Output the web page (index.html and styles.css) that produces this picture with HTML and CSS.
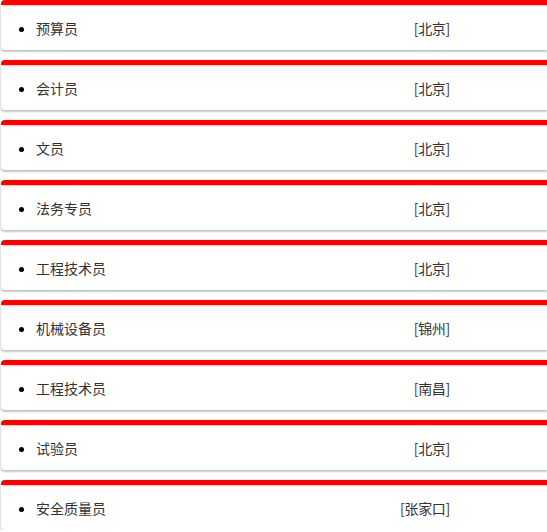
FILE: index.html
```html
<!DOCTYPE html>
<html lang="zh">
<head>
<meta charset="utf-8">
<link rel="stylesheet" href="styles.css">
</head>
<body>
<div class="list">
  <div class="card"><ul><li><span class="job">预算员</span><span class="loc">[北京]</span></li></ul></div>
  <div class="card"><ul><li><span class="job">会计员</span><span class="loc">[北京]</span></li></ul></div>
  <div class="card"><ul><li><span class="job">文员</span><span class="loc">[北京]</span></li></ul></div>
  <div class="card"><ul><li><span class="job">法务专员</span><span class="loc">[北京]</span></li></ul></div>
  <div class="card"><ul><li><span class="job">工程技术员</span><span class="loc">[北京]</span></li></ul></div>
  <div class="card"><ul><li><span class="job">机械设备员</span><span class="loc">[锦州]</span></li></ul></div>
  <div class="card"><ul><li><span class="job">工程技术员</span><span class="loc">[南昌]</span></li></ul></div>
  <div class="card"><ul><li><span class="job">试验员</span><span class="loc">[北京]</span></li></ul></div>
  <div class="card"><ul><li><span class="job">安全质量员</span><span class="loc">[张家口]</span></li></ul></div>
</div>
</body>
</html>
```
FILE: styles.css
```css
html, body {
  margin: 0;
  padding: 0;
  background: #fff;
  overflow: hidden;
}
body {
  font-family: "Noto Sans CJK SC", "Liberation Sans", sans-serif;
  font-size: 14px;
  color: #333;
}
.list {
  display: flex;
  flex-direction: column;
  gap: 10px;
  margin-left: 1px;
}
.card {
  height: 45px;
  border-top: 5px solid #ff0000;
  border-radius: 4px 0 0 4px;
  background: #fff;
  box-shadow: 0 1px 3px rgba(0,0,0,0.25), 0 2px 2px rgba(0,0,0,0.1);
  display: flex;
  align-items: center;
}
.card ul {
  margin: 0;
  padding: 1px 0 0 35px;
  width: 100%;
}
.card li {
  list-style: disc;
  display: list-item;
  color: #000;
}
.job {
  color: #333;
  display: inline-block;
  width: 300px;
}
.loc {
  color: #333;
  display: inline-block;
  width: 114px;
  text-align: right;
  letter-spacing: -0.3px;
}
```
